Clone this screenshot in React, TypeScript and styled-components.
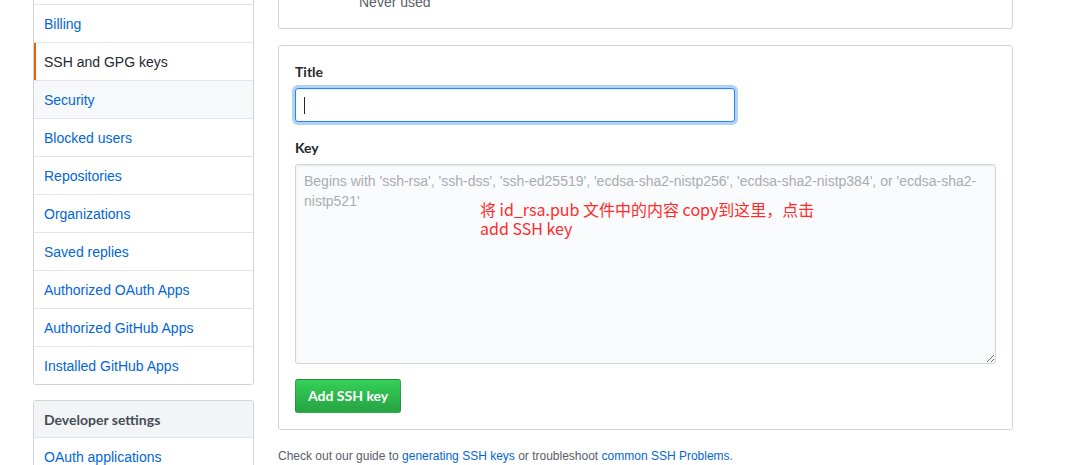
import React from 'react';
import styled, { createGlobalStyle } from 'styled-components';

const GlobalStyle = createGlobalStyle`
  html, body {
    margin: 0;
    padding: 0;
    background: #fff;
    overflow: hidden;
  }

  body {
    font-family: "Liberation Sans", Arial, sans-serif;
    font-size: 14px;
    line-height: 1.5;
    color: #24292e;
  }

  * {
    box-sizing: border-box;
  }
`;

const Page = styled.div`
  display: flex;
  align-items: flex-start;
  gap: 24px;
  padding-left: 33px;
  /* the settings page is scrolled down a little */
  margin-top: -34px;
`;

const Sidebar = styled.nav`
  flex: none;
  width: 221px;
  display: flex;
  flex-direction: column;
  gap: 15px;
`;

const Menu = styled.div`
  background: #fff;
  border: 1px solid #d1d5da;
  border-radius: 3px;
  overflow: hidden;
`;

const MenuHeading = styled.div`
  padding: 9px 10px 7px;
  line-height: 20px;
  font-family: Lato, "Liberation Sans", sans-serif;
  font-weight: 700;
  color: #444d56;
  background: #f3f4f6;
  border-bottom: 1px solid #e1e4e8;
`;

const MenuItem = styled.a<{ $selected?: boolean; $hover?: boolean }>`
  position: relative;
  display: block;
  padding: 9px 10px 7px;
  line-height: 21px;
  color: ${({ $selected }) => ($selected ? '#24292e' : '#0366d6')};
  background: ${({ $hover }) => ($hover ? '#f6f8fa' : '#fff')};
  text-decoration: none;
  border-bottom: 1px solid #e1e4e8;
  cursor: ${({ $selected }) => ($selected ? 'default' : 'pointer')};

  &:last-child {
    border-bottom: 0;
  }

  ${({ $selected }) =>
    $selected &&
    `
    &::before {
      content: '';
      position: absolute;
      top: 0;
      bottom: 0;
      left: 0;
      width: 2px;
      background: #e36209;
    }
  `}
`;

const Main = styled.main`
  flex: none;
  width: 735px;
  display: flex;
  flex-direction: column;
  gap: 16px;
`;

const Box = styled.div`
  border: 1px solid #d1d5da;
  border-radius: 3px;
  padding: 16px;
  background: #fff;
`;

const KeyMeta = styled.div`
  padding: 9px 0 0 64px;
  line-height: 20px;
  color: #586069;
`;

const FormGroup = styled.div<{ $tight?: boolean }>`
  margin-bottom: ${({ $tight }) => ($tight ? '15px' : '16px')};
`;

const Label = styled.label`
  display: block;
  margin-bottom: 6px;
  line-height: 20px;
  font-family: Lato, "Liberation Sans", sans-serif;
  font-weight: 700;
  color: #24292e;
`;

const Field = styled.div`
  position: relative;
`;

const TextInput = styled.input`
  display: block;
  width: 440px;
  height: 34px;
  padding: 6px 8px;
  font: inherit;
  font-size: 14px;
  line-height: 20px;
  color: #24292e;
  background: #fff;
  border: 1px solid #2188ff;
  border-radius: 3px;
  outline: none;
  box-shadow: inset 0 1px 2px rgba(27, 31, 35, 0.075), 0 0 0 3px rgba(3, 102, 214, 0.3);
`;

const Caret = styled.span`
  position: absolute;
  left: 9px;
  top: 9px;
  width: 1px;
  height: 17px;
  background: #24292e;
`;

const KeyArea = styled.textarea`
  display: block;
  width: 100%;
  height: 200px;
  padding: 6px 8px;
  font: inherit;
  font-size: 14px;
  line-height: 20px;
  color: #24292e;
  background: #fafbfc;
  border: 1px solid #d1d5da;
  border-radius: 3px;
  outline: none;
  resize: vertical;
  box-shadow: inset 0 1px 2px rgba(27, 31, 35, 0.075);

  &::placeholder {
    color: #a8adb3;
  }
`;

const Note = styled.div`
  position: absolute;
  left: 185px;
  top: 36px;
  font-family: "Noto Sans CJK SC", "Liberation Sans", sans-serif;
  font-size: 16px;
  line-height: 19px;
  color: #ff2b2b;
  pointer-events: none;
`;

const PrimaryButton = styled.button`
  display: inline-block;
  padding: 6px 12px;
  font-family: Lato, "Liberation Sans", sans-serif;
  font-size: 14px;
  font-weight: 700;
  line-height: 20px;
  color: #fff;
  background: linear-gradient(-180deg, #34d058 0%, #28a745 90%);
  border: 1px solid rgba(27, 31, 35, 0.2);
  border-radius: 3px;
  cursor: pointer;
`;

const Protip = styled.p`
  margin: 0;
  font-size: 12px;
  line-height: 20px;
  color: #586069;

  a {
    color: #0366d6;
    text-decoration: none;
  }
`;

const settingsLinks = [
  'Notifications',
  'Billing',
  'SSH and GPG keys',
  'Security',
  'Blocked users',
  'Repositories',
  'Organizations',
  'Saved replies',
  'Authorized OAuth Apps',
  'Authorized GitHub Apps',
  'Installed GitHub Apps',
];

const App: React.FC = () => {
  return (
    <>
      <GlobalStyle />
      <Page>
        <Sidebar>
          <Menu>
            {settingsLinks.map((name) => (
              <MenuItem
                key={name}
                $selected={name === 'SSH and GPG keys'}
                $hover={name === 'Security'}
              >
                {name}
              </MenuItem>
            ))}
          </Menu>
          <Menu>
            <MenuHeading>Developer settings</MenuHeading>
            <MenuItem>OAuth applications</MenuItem>
            <MenuItem>GitHub Apps</MenuItem>
          </Menu>
        </Sidebar>

        <Main>
          <Box>
            <KeyMeta>Never used</KeyMeta>
          </Box>

          <Box as="form" onSubmit={(e: React.FormEvent) => e.preventDefault()}>
            <FormGroup>
              <Label htmlFor="ssh-key-title">Title</Label>
              <Field>
                <TextInput id="ssh-key-title" type="text" />
                <Caret />
              </Field>
            </FormGroup>
            <FormGroup $tight>
              <Label htmlFor="ssh-key-body">Key</Label>
              <Field>
                <KeyArea
                  id="ssh-key-body"
                  placeholder="Begins with 'ssh-rsa', 'ssh-dss', 'ssh-ed25519', 'ecdsa-sha2-nistp256', 'ecdsa-sha2-nistp384', or 'ecdsa-sha2-nistp521'"
                />
                <Note>
                  将 id_rsa.pub 文件中的内容 copy到这里，点击
                  <br />
                  add SSH key
                </Note>
              </Field>
            </FormGroup>
            <PrimaryButton type="submit">Add SSH key</PrimaryButton>
          </Box>

          <Protip>
            Check out our guide to <a href="#">generating SSH keys</a> or troubleshoot{' '}
            <a href="#">common SSH Problems</a>.
          </Protip>
        </Main>
      </Page>
    </>
  );
};

export default App;
